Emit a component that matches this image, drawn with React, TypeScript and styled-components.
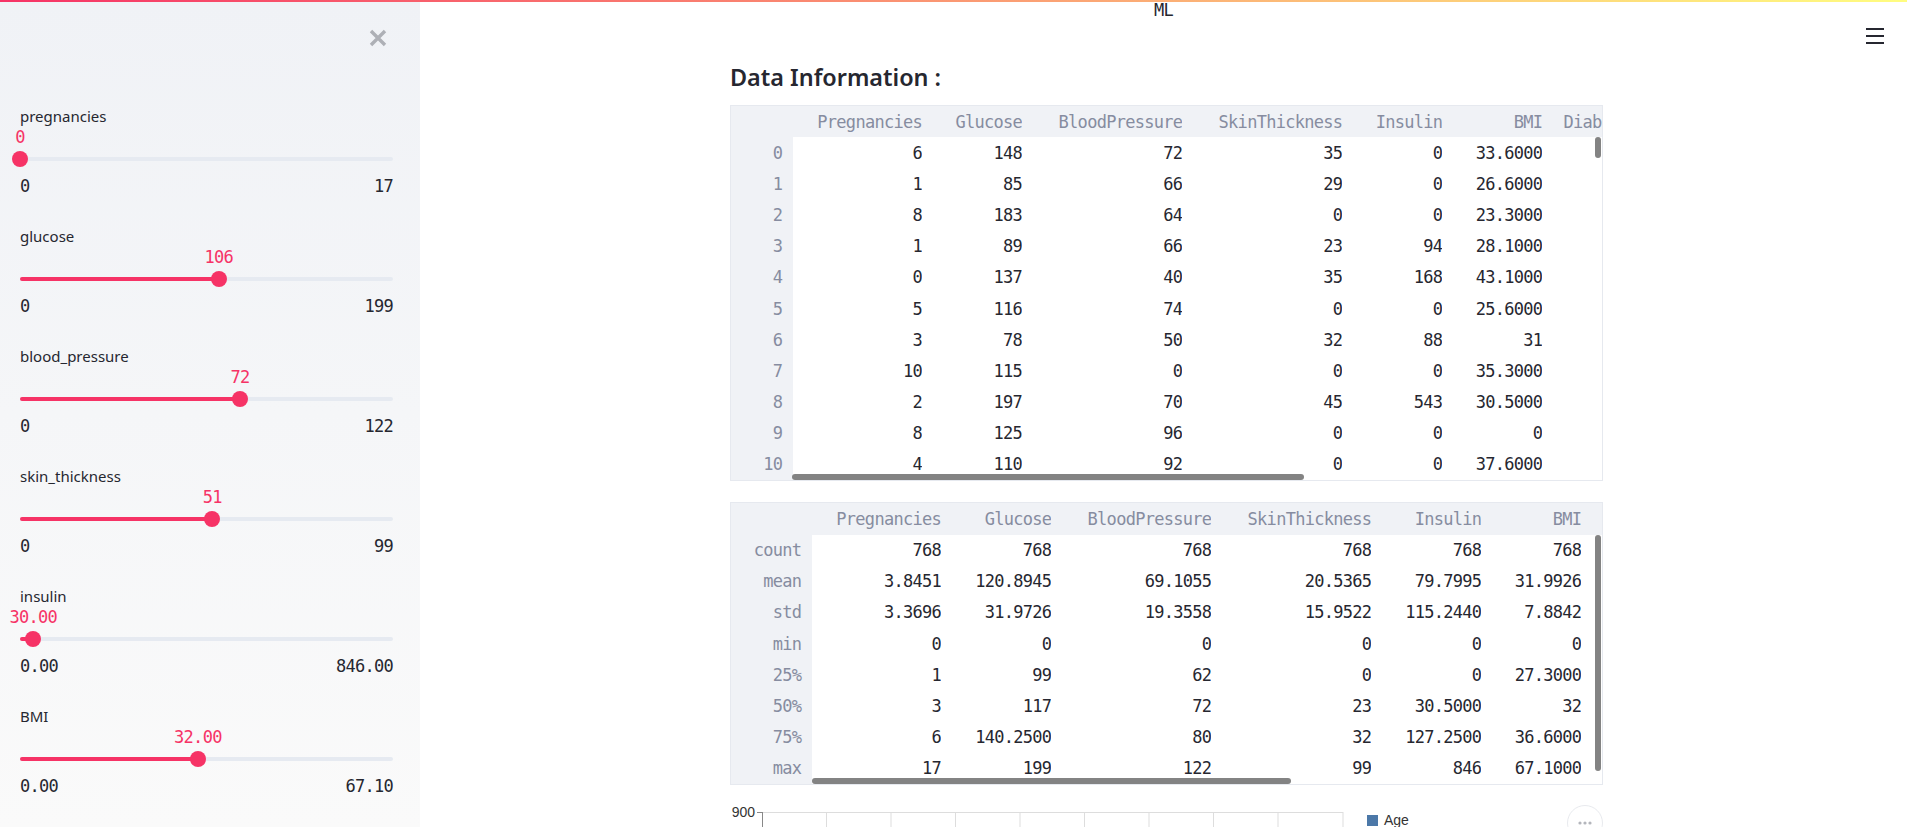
import React from "react";
import styled, { createGlobalStyle } from "styled-components";

const MONO = `"DejaVu Sans Mono", "Liberation Mono", monospace`;
const RED = "#f63366";
const INK = "#262730";

const GlobalStyle = createGlobalStyle`
  * { box-sizing: border-box; }
  html, body {
    margin: 0;
    padding: 0;
    height: 100%;
    overflow: hidden;
    background: #ffffff;
  }
  body {
    font-family: "Noto Sans", "Open Sans", sans-serif;
    color: ${INK};
  }
`;

const Decoration = styled.div`
  position: fixed;
  top: 0;
  left: 0;
  right: 0;
  height: 2px;
  background: linear-gradient(90deg, ${RED}, #fffd80);
  z-index: 10;
`;

const Shell = styled.div`
  display: flex;
  height: 100vh;
`;

/* ---------- sidebar ---------- */

const Sidebar = styled.aside`
  width: 420px;
  flex: none;
  height: 100%;
  padding: 29px 27px 0 20px;
  background: linear-gradient(180deg, #f0f2f6 0%, #fafafa 100%);
`;

const CloseRow = styled.div`
  display: flex;
  justify-content: flex-end;
  height: 18px;
  padding-right: 6px;
`;

const CloseButton = styled.button`
  width: 18px;
  height: 18px;
  padding: 0;
  border: 0;
  background: none;
  cursor: pointer;
  svg {
    display: block;
  }
`;

const SliderList = styled.div`
  display: flex;
  flex-direction: column;
  gap: 29px;
  margin-top: 59px;
`;

const SliderBlock = styled.div`
  display: flex;
  flex-direction: column;
`;

const SliderLabel = styled.label`
  font-size: 15px;
  line-height: 20px;
  color: ${INK};
`;

const ValueRow = styled.div`
  position: relative;
  height: 22px;
`;

const ThumbValue = styled.span`
  position: absolute;
  top: 0;
  transform: translateX(-50%);
  font-family: ${MONO};
  font-size: 17px;
  letter-spacing: -0.72px;
  line-height: 22px;
  color: ${RED};
  white-space: nowrap;
`;

const Track = styled.div`
  position: relative;
  height: 16px;
  margin-top: 3px;
`;

const Rail = styled.div`
  position: absolute;
  left: 0;
  right: 0;
  top: 6px;
  height: 4px;
  border-radius: 2px;
  background: #e6eaf1;
`;

const Fill = styled.div`
  position: absolute;
  left: 0;
  top: 6px;
  height: 4px;
  border-radius: 2px;
  background: ${RED};
`;

const Thumb = styled.div`
  position: absolute;
  top: 0;
  width: 16px;
  height: 16px;
  margin-left: -8px;
  border-radius: 50%;
  background: ${RED};
`;

const MinMax = styled.div`
  display: flex;
  justify-content: space-between;
  margin-top: 8px;
  font-family: ${MONO};
  font-size: 17px;
  letter-spacing: -0.72px;
  line-height: 22px;
  color: ${INK};
`;

/* ---------- main ---------- */

const Main = styled.main`
  flex: 1;
  min-width: 0;
  display: flex;
  flex-direction: column;
`;

const TopBar = styled.header`
  display: grid;
  grid-template-columns: 1fr auto 1fr;
  height: 45px;
`;

const AppTitle = styled.div`
  grid-column: 2;
  padding-top: 2px;
  font-family: ${MONO};
  font-size: 17px;
  letter-spacing: -0.72px;
  line-height: 16px;
  color: ${INK};
`;

const MenuButton = styled.button`
  justify-self: end;
  width: 18px;
  height: 18px;
  margin: 27px 23px 0 0;
  padding: 0;
  border: 0;
  background: none;
  cursor: pointer;
  svg {
    display: block;
  }
`;

const Content = styled.div`
  width: 873px;
  margin-left: 310px;
  padding-top: 16px;
`;

const Heading = styled.h3`
  margin: 0 0 12px;
  font-size: 23.4px;
  font-weight: 600;
  line-height: 32px;
  color: ${INK};
`;

const TableFrame = styled.div<{ $height: number; $gap: number }>`
  position: relative;
  height: ${(p) => p.$height}px;
  margin-top: ${(p) => p.$gap}px;
  border: 1px solid #e6e9ef;
  overflow: hidden;
`;

const Grid = styled.div<{ $cols: string; $head: number }>`
  display: grid;
  width: max-content;
  grid-template-columns: ${(p) => p.$cols};
  grid-template-rows: ${(p) => p.$head}px;
  grid-auto-rows: 31.2px;
  font-family: ${MONO};
  font-size: 17px;
  letter-spacing: -0.72px;
`;

type CellKind = "head" | "index" | "data";

const Cell = styled.div<{ $kind: CellKind }>`
  display: flex;
  align-items: center;
  justify-content: flex-end;
  white-space: nowrap;
  padding-right: ${(p) => (p.$kind === "index" ? "10.7px" : "0")};
  background: ${(p) => (p.$kind === "data" ? "#ffffff" : "#f0f2f6")};
  color: ${(p) => (p.$kind === "data" ? INK : "#868ca0")};
`;

const HScroll = styled.div<{ $left: number; $width: number }>`
  position: absolute;
  bottom: 0;
  left: ${(p) => p.$left}px;
  width: ${(p) => p.$width}px;
  height: 6px;
  border-radius: 3px;
  background: #838383;
`;

const VScroll = styled.div<{ $top: number; $height: number }>`
  position: absolute;
  right: 1px;
  top: ${(p) => p.$top}px;
  width: 6px;
  height: ${(p) => p.$height}px;
  border-radius: 3px;
  background: #838383;
`;

const ChartRow = styled.div`
  display: flex;
  justify-content: space-between;
  align-items: flex-start;
  margin-top: 19.5px;
`;

const ChartMenu = styled.button`
  width: 36px;
  height: 36px;
  padding: 0;
  border: 1px solid #e8eaee;
  border-radius: 50%;
  background: #ffffff;
  display: flex;
  align-items: center;
  justify-content: center;
  svg {
    display: block;
  }
`;

/* ---------- data ---------- */

const sliders = [
  { label: "pregnancies", value: 0, min: 0, max: 17, dp: 0 },
  { label: "glucose", value: 106, min: 0, max: 199, dp: 0 },
  { label: "blood_pressure", value: 72, min: 0, max: 122, dp: 0 },
  { label: "skin_thickness", value: 51, min: 0, max: 99, dp: 0 },
  { label: "insulin", value: 30, min: 0, max: 846, dp: 2 },
  { label: "BMI", value: 32, min: 0, max: 67.1, dp: 2 },
];

const columns = [
  "Pregnancies",
  "Glucose",
  "BloodPressure",
  "SkinThickness",
  "Insulin",
  "BMI",
  "DiabetesPedigreeFunction",
  "Age",
  "Outcome",
];

const headRows: string[][] = [
  ["6", "148", "72", "35", "0", "33.6000", "0.6270", "50", "1"],
  ["1", "85", "66", "29", "0", "26.6000", "0.3510", "31", "0"],
  ["8", "183", "64", "0", "0", "23.3000", "0.6720", "32", "1"],
  ["1", "89", "66", "23", "94", "28.1000", "0.1670", "21", "0"],
  ["0", "137", "40", "35", "168", "43.1000", "2.2880", "33", "1"],
  ["5", "116", "74", "0", "0", "25.6000", "0.2010", "30", "0"],
  ["3", "78", "50", "32", "88", "31", "0.2480", "26", "1"],
  ["10", "115", "0", "0", "0", "35.3000", "0.1340", "29", "0"],
  ["2", "197", "70", "45", "543", "30.5000", "0.1580", "53", "1"],
  ["8", "125", "96", "0", "0", "0", "0.2320", "54", "1"],
  ["4", "110", "92", "0", "0", "37.6000", "0.1910", "30", "0"],
];

const describeRows: [string, string[]][] = [
  ["count", ["768", "768", "768", "768", "768", "768", "768", "768", "768"]],
  ["mean", ["3.8451", "120.8945", "69.1055", "20.5365", "79.7995", "31.9926", "0.4719", "33.2409", "0.3490"]],
  ["std", ["3.3696", "31.9726", "19.3558", "15.9522", "115.2440", "7.8842", "0.3313", "11.7602", "0.4770"]],
  ["min", ["0", "0", "0", "0", "0", "0", "0.0780", "21", "0"]],
  ["25%", ["1", "99", "62", "0", "0", "27.3000", "0.2437", "24", "0"]],
  ["50%", ["3", "117", "72", "23", "30.5000", "32", "0.3725", "29", "0"]],
  ["75%", ["6", "140.2500", "80", "32", "127.2500", "36.6000", "0.6262", "41", "1"]],
  ["max", ["17", "199", "122", "99", "846", "67.1000", "2.4200", "81", "1"]],
];

/* ---------- parts ---------- */

function Slider({ label, value, min, max, dp }: (typeof sliders)[number]) {
  const pct = ((value - min) / (max - min)) * 100;
  return (
    <SliderBlock>
      <SliderLabel>{label}</SliderLabel>
      <ValueRow>
        <ThumbValue style={{ left: `${pct}%` }}>{value.toFixed(dp)}</ThumbValue>
      </ValueRow>
      <Track>
        <Rail />
        <Fill style={{ width: `${pct}%` }} />
        <Thumb style={{ left: `${pct}%` }} />
      </Track>
      <MinMax>
        <span>{min.toFixed(dp)}</span>
        <span>{max.toFixed(dp)}</span>
      </MinMax>
    </SliderBlock>
  );
}

interface DataTableProps {
  cols: string;
  head: number;
  height: number;
  gap: number;
  rows: [string, string[]][];
  hscroll: { left: number; width: number };
  vscroll: { top: number; height: number };
}

function DataTable({ cols, head, height, gap, rows, hscroll, vscroll }: DataTableProps) {
  return (
    <TableFrame $height={height} $gap={gap}>
      <Grid $cols={cols} $head={head}>
        <Cell $kind="index" />
        {columns.map((c) => (
          <Cell key={c} $kind="head">
            {c}
          </Cell>
        ))}
        {rows.map(([idx, vals]) => (
          <React.Fragment key={idx}>
            <Cell $kind="index">{idx}</Cell>
            {vals.map((v, i) => (
              <Cell key={i} $kind="data">
                {v}
              </Cell>
            ))}
          </React.Fragment>
        ))}
      </Grid>
      <HScroll $left={hscroll.left} $width={hscroll.width} />
      <VScroll $top={vscroll.top} $height={vscroll.height} />
    </TableFrame>
  );
}

function CloseIcon() {
  return (
    <svg width="18" height="18" viewBox="0 0 18 18">
      <path d="M2 2 L16 16 M16 2 L2 16" stroke="#aeb0b6" strokeWidth="3.4" />
    </svg>
  );
}

function MenuIcon() {
  return (
    <svg width="18" height="18" viewBox="0 0 18 18" fill={INK}>
      <rect x="0" y="1" width="18" height="2" />
      <rect x="0" y="8" width="18" height="2" />
      <rect x="0" y="15" width="18" height="2" />
    </svg>
  );
}

function AgeChart() {
  const grid = Array.from({ length: 8 }, (_, k) => 32 + 64.5 * (k + 1));
  return (
    <svg width="690" height="300" viewBox="0 0 690 300">
      <line x1="32" y1="7.5" x2="613" y2="7.5" stroke="#dddddd" />
      {grid.map((x) => (
        <line key={x} x1={x} y1="7" x2={x} y2="300" stroke="#dddddd" />
      ))}
      <line x1="613" y1="7" x2="613" y2="300" stroke="#dddddd" />
      <line x1="32.5" y1="7" x2="32.5" y2="300" stroke="#888888" />
      <line x1="27" y1="7.5" x2="32" y2="7.5" stroke="#888888" />
      <text
        x="25"
        y="12"
        textAnchor="end"
        fontFamily="'Liberation Sans', Arial, sans-serif"
        fontSize="14"
        fill="#333333"
      >
        900
      </text>
      <rect x="637" y="10" width="11" height="11" fill="#4c78a8" />
      <text x="654" y="20" fontFamily="'Liberation Sans', Arial, sans-serif" fontSize="14" fill="#333333">
        Age
      </text>
    </svg>
  );
}

export default function App() {
  return (
    <>
      <GlobalStyle />
      <Decoration />
      <Shell>
        <Sidebar>
          <CloseRow>
            <CloseButton aria-label="Close sidebar">
              <CloseIcon />
            </CloseButton>
          </CloseRow>
          <SliderList>
            {sliders.map((s) => (
              <Slider key={s.label} {...s} />
            ))}
          </SliderList>
        </Sidebar>
        <Main>
          <TopBar>
            <AppTitle>ML</AppTitle>
            <MenuButton aria-label="Main menu">
              <MenuIcon />
            </MenuButton>
          </TopBar>
          <Content>
            <Heading>Data Information :</Heading>
            <DataTable
              cols="62px 129px 100px 160.3px 160px 100px 100px 249.5px 80px 100px"
              head={31}
              height={376}
              gap={0}
              rows={headRows.map((r, i) => [String(i), r])}
              hscroll={{ left: 61, width: 512 }}
              vscroll={{ top: 31, height: 21 }}
            />
            <DataTable
              cols="81px 129px 110.3px 160px 160px 110px 100px 262px 110px 100px"
              head={31.5}
              height={283}
              gap={21}
              rows={describeRows}
              hscroll={{ left: 81, width: 479 }}
              vscroll={{ top: 31.5, height: 236 }}
            />
            <ChartRow>
              <AgeChart />
              <ChartMenu aria-label="Chart actions">
                <svg width="14" height="4" viewBox="0 0 14 4" fill="#b4b6bc">
                  <circle cx="2" cy="2" r="1.6" />
                  <circle cx="7" cy="2" r="1.6" />
                  <circle cx="12" cy="2" r="1.6" />
                </svg>
              </ChartMenu>
            </ChartRow>
          </Content>
        </Main>
      </Shell>
    </>
  );
}
